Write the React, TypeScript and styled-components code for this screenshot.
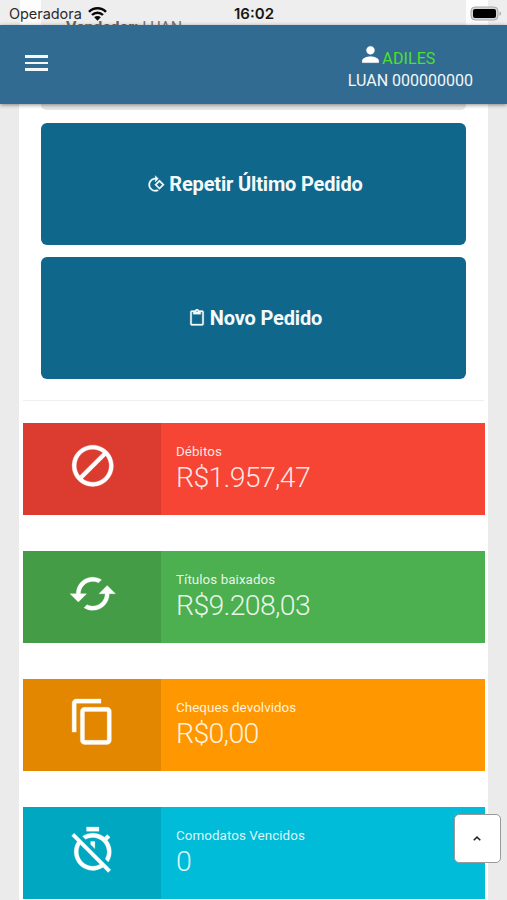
import React from "react";
import styled, { createGlobalStyle } from "styled-components";

const Global = createGlobalStyle`
  * { box-sizing: border-box; }
  html, body { margin: 0; }
  body { background: #ebebeb; font-family: Roboto, "Liberation Sans", sans-serif; overflow: hidden; }
`;

const Screen = styled.div`
  position: relative;
  width: 507px;
  height: 900px;
  overflow: hidden;
  display: flex;
  flex-direction: column;
  background: #ebebeb;
`;

const StatusBar = styled.div`
  position: relative;
  flex: none;
  height: 25px;
  padding: 2px 8px 0 9px;
  display: grid;
  grid-template-columns: 1fr auto 1fr;
  align-items: center;
  background: linear-gradient(90deg, #eeeeee 20px, #fdfdfd 20px, #fdfdfd 41px, #eeeeee 41px, #eeeeee 466px, #fdfdfd 466px, #fdfdfd 488px, #eeeeee 488px);
  font-family: Inter, "Liberation Sans", sans-serif;
  color: #161616;
`;

const Carrier = styled.div`
  display: flex;
  align-items: center;
  gap: 6px;
  font-size: 14.5px;
  letter-spacing: -0.05px;
  color: #2b2b2b;
`;

const Clock = styled.div`
  font-size: 15px;
  font-weight: 600;
`;

const Battery = styled.svg`
  justify-self: end;
  margin-right: -3px;
  margin-top: -1px;
`;

const ScrolledText = styled.div`
  position: absolute;
  left: 66px;
  top: 18px;
  font: 400 16px/19px Roboto, sans-serif;
  letter-spacing: -0.15px;
  color: #777;
  white-space: nowrap;
  b { font-weight: 700; color: #666; }
`;

const Header = styled.header`
  position: relative;
  z-index: 1;
  flex: none;
  height: 79px;
  padding: 0 34px 0 25px;
  display: flex;
  justify-content: space-between;
  background: #316b91;
  box-shadow: 0 1px 4px rgba(0, 0, 0, 0.45);
  color: #f1f7fb;
`;

const MenuButton = styled.button`
  margin-top: 30px;
  width: 23px;
  height: 16px;
  padding: 0;
  border: 0;
  background: none;
  display: flex;
  flex-direction: column;
  justify-content: space-between;
`;

const MenuLine = styled.span`
  height: 2.6px;
  background: #f2f7fa;
`;

const User = styled.div`
  display: flex;
  flex-direction: column;
  align-items: center;
  padding-top: 17px;
  font-size: 16px;
  line-height: 22px;
  white-space: nowrap;
`;

const UserName = styled.div`
  display: flex;
  height: 28px;
  margin-left: -27px;
  color: #4de02d;
  letter-spacing: 0.1px;
  line-height: 34px;
  svg { color: #fff; margin-right: -1px; }
`;

const UserCode = styled.div`
  letter-spacing: 0;
`;

const Page = styled.main`
  width: 469px;
  margin-left: 19px;
  height: 796px;
  padding: 0 4px;
  background: #fff;
  flex: none;
`;

const Actions = styled.section`
  display: flex;
  flex-direction: column;
  gap: 12px;
  padding: 0 18px 21px;
  border-bottom: 1px solid #efefef;
`;

const PreviousEdge = styled.div`
  height: 6px;
  margin-bottom: 1px;
  border-radius: 0 0 5px 5px;
  background: #e6e6e6;
`;

const Action = styled.button`
  height: 122px;
  border: 0;
  border-radius: 6px;
  background: #10678c;
  color: #f4fafc;
  display: flex;
  align-items: center;
  justify-content: center;
  gap: 4px;
  padding: 0 0 0 3px;
  font: 700 20px/24px Roboto, sans-serif;
  letter-spacing: -0.16px;
`;

const Cards = styled.section`
  display: flex;
  flex-direction: column;
  gap: 36.5px;
  padding: 21.9px 0 0;
`;

const Card = styled.article<{ $color: string }>`
  height: 91.7px;
  width: 462px;
  display: flex;
  background: ${(p) => p.$color};
  color: rgba(255, 255, 255, 0.88);
`;

const CardIcon = styled.div`
  width: 138px;
  display: flex;
  justify-content: center;
  padding: 18px 0 0 1px;
  background: rgba(0, 0, 0, 0.11);
  color: #fff;
`;

const CardText = styled.div`
  padding: 19px 0 0 15px;
`;

const Label = styled.div`
  font-size: 13.4px;
  line-height: 20px;
  letter-spacing: 0.06px;
`;

const Value = styled.div`
  font-size: 28.5px;
  line-height: 32px;
  font-weight: 300;
  letter-spacing: -0.7px;
`;

const TopButton = styled.button`
  position: absolute;
  z-index: 2;
  left: 454px;
  top: 814px;
  width: 47px;
  height: 49px;
  display: flex;
  align-items: center;
  justify-content: center;
  border: 1px solid #999;
  border-radius: 5px;
  background: #fff;
  padding: 0 1px 0 0;
`;

const paths = {
  person: "M12 12c2.21 0 4-1.79 4-4s-1.79-4-4-4-4 1.79-4 4 1.79 4 4 4zm0 2c-2.67 0-8 1.34-8 4v2h16v-2c0-2.66-5.33-4-8-4z",
  rotate: "M7.34 6.41L.86 12.9l6.49 6.48 6.49-6.48-6.5-6.49zM3.69 12.9l3.66-3.66L11 12.9l-3.66 3.66-3.65-3.66zm15.67-6.26C17.61 4.88 15.3 4 13 4V.76L8.76 5 13 9.24V6c1.79 0 3.58.68 4.95 2.05 2.73 2.73 2.73 7.17 0 9.9C16.58 19.32 14.79 20 13 20c-.97 0-1.94-.21-2.84-.61l-1.49 1.49C10.02 21.62 11.51 22 13 22c2.3 0 4.61-.88 6.36-2.64 3.52-3.51 3.52-9.21 0-12.72z",
  paste: "M19 2h-4.18C14.4.84 13.3 0 12 0c-1.3 0-2.4.84-2.82 2H5c-1.1 0-2 .9-2 2v16c0 1.1.9 2 2 2h14c1.1 0 2-.9 2-2V4c0-1.1-.9-2-2-2zm-7 0c.55 0 1 .45 1 1s-.45 1-1 1-1-.45-1-1 .45-1 1-1zm7 18H5V4h2v3h10V4h2v16z",
  block: "M12 2C6.5 2 2 6.5 2 12s4.5 10 10 10 10-4.5 10-10S17.5 2 12 2zM4 12c0-4.4 3.6-8 8-8 1.8 0 3.5.6 4.9 1.7L5.7 16.9C4.6 15.5 4 13.8 4 12zm8 8c-1.8 0-3.5-.6-4.9-1.7L18.3 7.1C19.4 8.5 20 10.2 20 12c0 4.4-3.6 8-8 8z",
  cached: "M19 8l-4 4h3c0 3.31-2.69 6-6 6-1.01 0-1.97-.25-2.8-.7l-1.46 1.46C8.97 19.54 10.43 20 12 20c4.42 0 8-3.58 8-8h3l-4-4zM6 12c0-3.31 2.69-6 6-6 1.01 0 1.97.25 2.8.7l1.46-1.46C15.03 4.46 13.57 4 12 4c-4.42 0-8 3.58-8 8H1l4 4 4-4H6z",
  copy: "M16 1H4c-1.1 0-2 .9-2 2v14h2V3h12V1zm3 4H8c-1.1 0-2 .9-2 2v14c0 1.1.9 2 2 2h11c1.1 0 2-.9 2-2V7c0-1.1-.9-2-2-2zm0 16H8V7h11v14z",
  timerOff: "M19.04 4.55l-1.42 1.42C16.07 4.74 14.12 4 12 4c-1.83 0-3.53.55-4.95 1.48l1.46 1.46C9.53 6.35 10.73 6 12 6c3.87 0 7 3.13 7 7 0 1.27-.35 2.47-.94 3.49l1.45 1.45C20.45 16.53 21 14.83 21 13c0-2.12-.74-4.07-1.97-5.61l1.42-1.42-1.41-1.42zM15 1H9v2h6V1zm-4 8.44l2 2V8h-2v1.44zM3.02 4L1.75 5.27 4.5 8.03C3.55 9.45 3 11.16 3 13c0 4.97 4.02 9 9 9 1.84 0 3.55-.55 4.98-1.5l2.5 2.5 1.27-1.27-7.71-7.71L3.02 4zM12 20c-3.87 0-7-3.13-7-7 0-1.28.35-2.48.95-3.52l9.56 9.56c-1.03.61-2.23.96-3.51.96z",
};

const IconSvg = styled.svg<{ $flip?: boolean }>`
  flex: none;
  transform: ${(p) => (p.$flip ? "scaleX(-1)" : "none")};
`;

function Icon({ name, size, flip }: { name: keyof typeof paths; size: number; flip?: boolean }) {
  return (
    <IconSvg $flip={flip} width={size} height={size} viewBox="0 0 24 24" fill="currentColor">
      <path d={paths[name]} stroke="currentColor" strokeWidth={size < 20 ? 0.4 : 0.15} />
    </IconSvg>
  );
}

const cards: { icon: keyof typeof paths; color: string; label: string; value: string }[] = [
  { icon: "block", color: "#f64435", label: "Débitos", value: "R$1.957,47" },
  { icon: "cached", color: "#4db050", label: "Títulos baixados", value: "R$9.208,03" },
  { icon: "copy", color: "#ff9800", label: "Cheques devolvidos", value: "R$0,00" },
  { icon: "timerOff", color: "#00bcd9", label: "Comodatos Vencidos", value: "0" },
];

export default function App() {
  return (
    <>
      <Global />
      <Screen>
        <StatusBar>
          <ScrolledText><b>Vendedor:</b> LUAN</ScrolledText>
          <Carrier>
            Operadora
            <svg width="19" height="14" viewBox="0 0 19 14" fill="none" stroke="#080808" strokeWidth="2.4">
              <path d="M1 4.8a12 12 0 0 1 17 0M4 8a7.8 7.8 0 0 1 11 0" />
              <path d="M6.2 10.3a4.7 4.7 0 0 1 6.6 0L9.5 13.7z" fill="#080808" stroke="none" />
            </svg>
          </Carrier>
          <Clock>16:02</Clock>
          <Battery width="32" height="15" viewBox="0 0 32 15">
            <rect x="1" y="1" width="27" height="13" rx="4" fill="#d6d6d6" stroke="#aaa" />
            <rect x="3" y="3" width="23" height="9" rx="2" fill="#000" />
            <path d="M29.5 5.2c2 .8 2 3.8 0 4.6z" fill="#aaa" />
          </Battery>
        </StatusBar>
        <Header>
          <MenuButton aria-label="Menu"><MenuLine /><MenuLine /><MenuLine /></MenuButton>
          <User>
            <UserName><Icon name="person" size={25} />ADILES</UserName>
            <UserCode>LUAN 000000000</UserCode>
          </User>
        </Header>
        <Page>
          <Actions>
            <PreviousEdge />
            <Action><Icon name="rotate" size={18} flip />Repetir Último Pedido</Action>
            <Action><Icon name="paste" size={18} />Novo Pedido</Action>
          </Actions>
          <Cards>
            {cards.map((c) => (
              <Card key={c.label} $color={c.color}>
                <CardIcon><Icon name={c.icon} size={49.5} /></CardIcon>
                <CardText>
                  <Label>{c.label}</Label>
                  <Value>{c.value}</Value>
                </CardText>
              </Card>
            ))}
          </Cards>
        </Page>
        <TopButton aria-label="Voltar ao topo">
          <svg width="8" height="5" viewBox="0 0 8 5" fill="none" stroke="#222" strokeWidth="1.5">
            <path d="M.7 4.3L4 1.1l3.3 3.2" />
          </svg>
        </TopButton>
      </Screen>
    </>
  );
}
